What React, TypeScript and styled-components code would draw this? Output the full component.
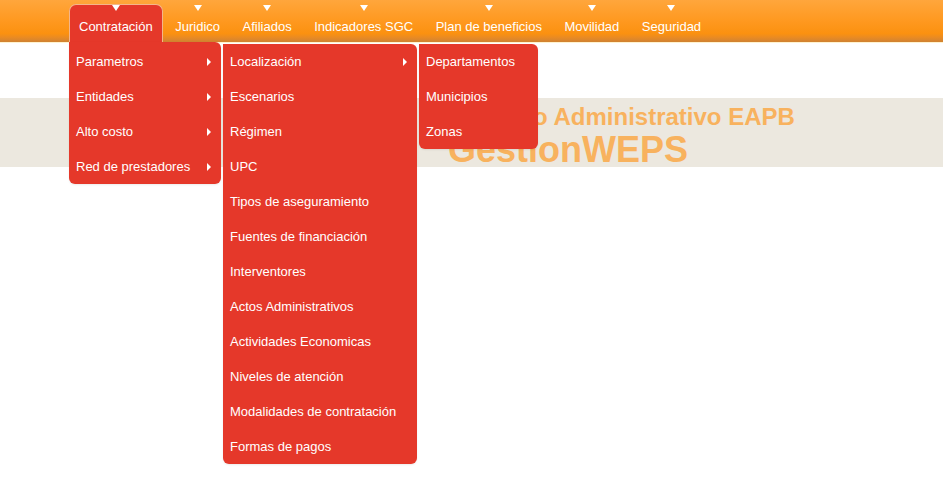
import React from "react";
import styled, { createGlobalStyle, css } from "styled-components";

const Global = createGlobalStyle`
  html, body { margin: 0; padding: 0; background: #ffffff; }
  body { font-family: "Liberation Sans", Arial, sans-serif; }
  * { box-sizing: border-box; }
`;

const Page = styled.div`
  width: 943px;
  min-height: 483px;
  background: #fff;
`;

const NavBar = styled.nav`
  height: 43px;
  background: linear-gradient(to bottom, #ffa63c 0%, #ff9a22 45%, #fb9110 80%, #e88a24 90%, #cf8232 100%);
  border-bottom: 1px solid #fff3cf;
  position: relative;
  z-index: 10;
`;

const NavList = styled.ul`
  display: flex;
  list-style: none;
  margin: 0;
  padding: 4px 0 0 69px;
  gap: 2.5px;
  height: 42px;
`;

const NavItem = styled.li<{ $active?: boolean }>`
  position: relative;
  height: 38px;
  padding: 14px 9px 0 9px;
  line-height: 16px;
  font-size: 13px;
  color: #ffffff;
  white-space: nowrap;
  border: 1px solid ${(p) => (p.$active ? "#f4b68a" : "transparent")};
  border-bottom: none;
  border-radius: 7px 7px 0 0;
  background: ${(p) => (p.$active ? "#e5382a" : "transparent")};

  &::before {
    content: "";
    position: absolute;
    top: 0;
    left: 50%;
    margin-left: -4px;
    border-left: 4px solid transparent;
    border-right: 4px solid transparent;
    border-top: 6px solid #ffffff;
  }
`;

const Dropdown = styled.ul<{ $width: number; $sub?: boolean }>`
  position: absolute;
  width: ${(p) => p.$width}px;
  margin: 0;
  list-style: none;
  display: flex;
  flex-direction: column;
  background: #e5382a;
  border-radius: 0 6px 6px 6px;
  box-shadow: 0 1px 2px rgba(0, 0, 0, 0.08);
  ${(p) =>
    p.$sub
      ? css`
          top: 0;
          left: calc(100% + 2px);
          padding: 0;
        `
      : css`
          top: 100%;
          left: -1px;
          padding: 2px 0 0 0;
        `}
`;

const MenuItem = styled.li`
  position: relative;
  height: 35px;
  line-height: 35px;
  padding: 0 7px;
  font-size: 13px;
  color: #ffffff;
  white-space: nowrap;
`;

const SubArrow = styled.span`
  position: absolute;
  right: 10px;
  top: 14px;
  width: 0;
  height: 0;
  border-top: 4px solid transparent;
  border-bottom: 4px solid transparent;
  border-left: 4px solid #ffffff;
`;

const Banner = styled.section`
  margin-top: 55px;
  height: 69px;
  background: #ece8df;
  padding: 7px 0 0 448px;
  display: flex;
  flex-direction: column;
  gap: 3px;
  color: #f8b25e;
  font-weight: bold;
`;

const Subtitle = styled.div`
  font-size: 24px;
  line-height: 24px;
  white-space: nowrap;
  padding-left: 5px;
`;

const Title = styled.div`
  font-size: 36px;
  line-height: 36px;
  white-space: nowrap;
`;

const level1 = ["Parametros", "Entidades", "Alto costo", "Red de prestadores"];
const level2 = [
  "Localización",
  "Escenarios",
  "Régimen",
  "UPC",
  "Tipos de aseguramiento",
  "Fuentes de financiación",
  "Interventores",
  "Actos Administrativos",
  "Actividades Economicas",
  "Niveles de atención",
  "Modalidades de contratación",
  "Formas de pagos",
];
const level3 = ["Departamentos", "Municipios", "Zonas"];
const navItems = [
  "Contratación",
  "Juridico",
  "Afiliados",
  "Indicadores SGC",
  "Plan de beneficios",
  "Movilidad",
  "Seguridad",
];

export default function App() {
  return (
    <Page>
      <Global />
      <NavBar>
        <NavList>
          {navItems.map((n, i) => (
            <NavItem key={n} $active={i === 0}>
              {n}
              {i === 0 && (
                <Dropdown $width={152}>
                  {level1.map((a, j) => (
                    <MenuItem key={a}>
                      {a}
                      <SubArrow />
                      {j === 0 && (
                        <Dropdown $width={194} $sub>
                          {level2.map((b, k) => (
                            <MenuItem key={b}>
                              {b}
                              {k === 0 && (
                                <>
                                  <SubArrow />
                                  <Dropdown $width={119} $sub>
                                    {level3.map((c) => (
                                      <MenuItem key={c}>{c}</MenuItem>
                                    ))}
                                  </Dropdown>
                                </>
                              )}
                            </MenuItem>
                          ))}
                        </Dropdown>
                      )}
                    </MenuItem>
                  ))}
                </Dropdown>
              )}
            </NavItem>
          ))}
        </NavList>
      </NavBar>
      <Banner>
        <Subtitle>Proceso Administrativo EAPB</Subtitle>
        <Title>GestionWEPS</Title>
      </Banner>
    </Page>
  );
}
